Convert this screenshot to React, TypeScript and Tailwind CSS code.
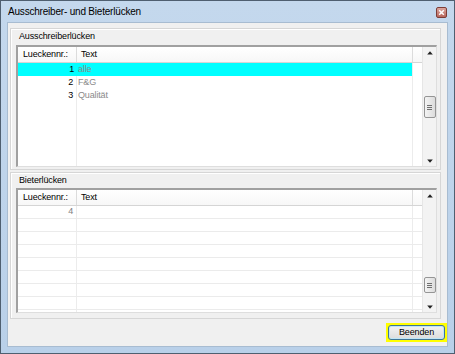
import React from "react";

type Row = { n: string; t: string; sel?: boolean };

function Arrow({ up }: { up?: boolean }) {
  return (
    <svg width="6" height="4" viewBox="0 0 6 4" className="block">
      {up ? (
        <path d="M3 0.3 L5.8 3.6 L0.2 3.6 Z" fill="#202020" />
      ) : (
        <path d="M0.2 0.4 L5.8 0.4 L3 3.7 Z" fill="#202020" />
      )}
    </svg>
  );
}

function ScrollBar({ thumbTop, thumbH }: { thumbTop: number; thumbH: number }) {
  return (
    <div className="w-[14px] flex flex-col bg-[#f3f3f3] border-l border-[#e6e6e6]">
      <div className="h-[11px] flex items-center justify-center">
        <Arrow up />
      </div>
      <div className="flex-1 flex flex-col items-center" style={{ paddingTop: thumbTop }}>
        <div
          className="w-[12px] rounded-[2px] border border-[#959595] bg-gradient-to-r from-[#f4f4f4] to-[#dcdcdc] flex flex-col items-center justify-center gap-[1px]"
          style={{ height: thumbH }}
        >
          <div className="w-[5px] h-px bg-[#6f6f6f]" />
          <div className="w-[5px] h-px bg-[#6f6f6f]" />
          <div className="w-[5px] h-px bg-[#6f6f6f]" />
        </div>
      </div>
      <div className="h-[11px] flex items-center justify-center">
        <Arrow />
      </div>
    </div>
  );
}

function Grid({
  rows,
  lines,
  thumbTop,
  thumbH,
  height,
  fillerRows,
}: {
  rows: Row[];
  lines: boolean;
  thumbTop: number;
  thumbH: number;
  height: number;
  fillerRows: number;
}) {
  const lineCls = lines ? "border-b border-[#ebebeb]" : "";
  const filler = Array.from({ length: fillerRows });
  return (
    <div
      className="ml-[5px] mr-[3px] flex bg-white border-l-2 border-t-2 border-r border-b border-l-[#a0a0a0] border-t-[#a0a0a0] border-r-[#dedede] border-b-[#dedede] overflow-hidden"
      style={{ height }}
    >
      <div className="flex-1 flex flex-col overflow-hidden">
        <div className="h-[16px] flex shrink-0 border-b border-[#d5d5d5] bg-gradient-to-b from-white to-[#f7f7f7] text-black">
          <div className="w-[59px] border-r border-[#dcdcdc] pl-[5px] flex items-center">Lueckennr.:</div>
          <div className="flex-1 border-r border-[#dcdcdc] pl-[4px] flex items-center">Text</div>
          <div className="w-[9px]" />
        </div>
        {rows.map((r, i) => (
          <div key={i} className={`h-[13px] flex shrink-0 ${lineCls}`}>
            <div
              className={`w-[59px] pr-[3px] flex items-center justify-end ${
                r.sel ? "bg-[#00ffff] text-black" : "border-r border-[#ececec] " + (lines ? "text-[#808080]" : "text-black")
              }`}
            >
              {r.n}
            </div>
            <div
              className={`flex-1 pl-[1px] flex items-center text-[#8a8a8a] ${
                r.sel ? "bg-[#00ffff] border-r border-[#ececec]" : "border-r border-[#ececec]"
              }`}
            >
              {r.t}
            </div>
            <div className="w-[9px]" />
          </div>
        ))}
        {filler.map((_, i) => (
          <div key={"f" + i} className={`h-[13px] flex shrink-0 ${lineCls}`}>
            <div className="w-[59px] border-r border-[#ececec]" />
            <div className="flex-1 border-r border-[#ececec]" />
            <div className="w-[9px]" />
          </div>
        ))}
        <div className="flex-1 flex">
          <div className="w-[59px] border-r border-[#ececec]" />
          <div className="flex-1 border-r border-[#ececec]" />
          <div className="w-[9px]" />
        </div>
      </div>
      <ScrollBar thumbTop={thumbTop} thumbH={thumbH} />
    </div>
  );
}

function CloseBtn() {
  return (
    <div className="w-[11px] h-[11px] mr-[1px] mt-[2px] rounded-[2px] border border-[#7d3d36] bg-gradient-to-b from-[#dba59d] to-[#b8675d] flex items-center justify-center">
      <svg width="7" height="7" viewBox="0 0 7 7" className="block">
        <path d="M1.2 1.2 L5.8 5.8 M5.8 1.2 L1.2 5.8" stroke="#ffffff" strokeWidth="1.5" />
      </svg>
    </div>
  );
}

export default function App() {
  const upperRows: Row[] = [
    { n: "1", t: "alle", sel: true },
    { n: "2", t: "F&G" },
    { n: "3", t: "Qualität" },
  ];
  const lowerRows: Row[] = [{ n: "4", t: "" }];
  return (
    <div
      className="w-[455px] h-[354px] flex flex-col border border-[#4f5f70] bg-gradient-to-b from-[#c4d8ed] to-[#b9d0e9] px-[6px] pb-[6px] text-[9px] tracking-[-0.15px] text-black"
      style={{ fontFamily: '"Liberation Sans", Arial, sans-serif' }}
    >
      <div className="h-[21px] flex items-center justify-between shrink-0">
        <span className="text-[10px] tracking-[-0.2px] text-black pl-px">Ausschreiber- und Bieterlücken</span>
        <CloseBtn />
      </div>
      <div className="flex-1 flex flex-col bg-[#f0f0f0] border border-[#a8bcd1]">
        <div className="mt-[5px] ml-[2px] mr-[6px] h-[142px] flex flex-col border border-[#d6d6d6] shadow-[inset_1px_1px_0_#ffffff]">
          <div className="h-[16px] pl-[8px] flex items-center">Ausschreiberlücken</div>
          <Grid rows={upperRows} lines={false} thumbTop={38} thumbH={22} height={122} fillerRows={0} />
        </div>
        <div className="mt-[2px] ml-[2px] mr-[6px] h-[147px] flex flex-col border border-[#d6d6d6] shadow-[inset_1px_1px_0_#ffffff]">
          <div className="h-[15px] pl-[8px] flex items-center">Bieterlücken</div>
          <Grid rows={lowerRows} lines={true} thumbTop={76} thumbH={16} height={125} fillerRows={8} />
        </div>
        <div className="flex-1 flex items-center justify-end">
          <div className="w-[61px] h-[19px] bg-[#ffff00] p-[2px]">
            <div className="w-full h-full rounded-[3px] border border-[#3f7596] bg-gradient-to-b from-[#f3f3f3] to-[#dcdcdc] shadow-[inset_0_0_0_1px_#bfe6f7] flex items-center justify-center text-black">
              Beenden
            </div>
          </div>
        </div>
      </div>
    </div>
  );
}
